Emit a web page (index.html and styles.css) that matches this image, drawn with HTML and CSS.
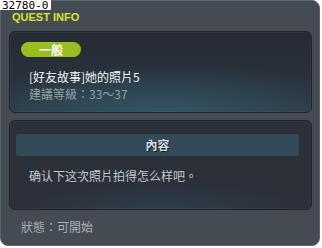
FILE: index.html
```html
<!DOCTYPE html>
<html lang="zh-TW">
<head>
    <meta charset="UTF-8">
    <meta name="viewport" content="width=device-width, initial-scale=1.0">
    <title>Quest Info</title>
    <link rel="stylesheet" href="styles.css">
</head>
<body>

    <div class="quest-window">
        <span class="quest-id">32780-0</span>
        <div class="window-title">QUEST INFO</div>

        <!-- Görev özeti -->
        <div class="panel summary">
            <span class="badge">一般</span>
            <div class="quest-name">[好友故事]她的照片5</div>
            <div class="quest-level">建議等級：33～37</div>
        </div>

        <!-- Görev içeriği -->
        <div class="panel content">
            <div class="content-head">內容</div>
            <div class="content-text">确认下这次照片拍得怎么样吧。</div>
        </div>

        <div class="quest-status">狀態：可開始</div>
    </div>

</body>
</html>
```

FILE: styles.css
```css
/* Sayfa genel ayarları */
body {
    margin: 0;
    background-color: #fff;
    font-family: "Noto Sans CJK TC", "DejaVu Sans", sans-serif;
}

/* Ana pencere */
.quest-window {
    position: relative;
    width: 320px;
    height: 246px;
    box-sizing: border-box;
    padding: 0 7px 0 8px;
    background-color: #444b53;
    border: 1px solid #5c656e;
    border-radius: 8px;
}

/* Sol üstteki kimlik etiketi */
.quest-id {
    position: absolute;
    top: -1px;
    left: -1px;
    height: 10px;
    padding: 0 3px 0 2px;
    background-color: #fff;
    color: #000;
    font-family: "DejaVu Sans Mono", monospace;
    font-size: 11px;
    line-height: 11px;
}

.window-title {
    height: 19px;
    padding: 11px 0 0 3px;
    color: #d6e62a;
    font-family: "Liberation Sans", Arial, sans-serif;
    font-weight: bold;
    font-size: 11px;
    line-height: 11px;
}

/* Panel ortak */
.panel {
    border: 1px solid #1f242b;
    border-radius: 6px;
    box-shadow: inset 0 0 0 1px rgba(255, 255, 255, 0.04);
}

.summary {
    height: 70px;
    box-sizing: content-box;
    padding: 10px 11px 0;
    background: radial-gradient(ellipse 70% 60% at 50% 100%, #335566 0%, rgba(51, 85, 102, 0) 100%),
                linear-gradient(#262b33, #2b3640);
}

.badge {
    display: block;
    width: 60px;
    height: 15px;
    border-radius: 8px;
    background-color: #98bf1d;
    color: #fff;
    font-weight: bold;
    font-size: 12px;
    line-height: 15px;
    text-align: center;
}

.quest-name {
    margin: 12px 0 0 8px;
    color: #f2f4f5;
    font-size: 12px;
    line-height: 16px;
}

.quest-level {
    margin: 1px 0 0 8px;
    color: #96a0a8;
    font-size: 12px;
    line-height: 15px;
}

.content {
    height: 75px;
    margin-top: 7px;
    padding: 13px 0 0 6px;
    box-sizing: content-box;
    background: radial-gradient(ellipse 50% 30% at 50% 100%, #2e3e4a 0%, rgba(46, 62, 74, 0) 100%),
                #2b3039;
}

.content-head {
    height: 22px;
    margin-right: 12px;
    border-radius: 3px;
    background-color: #334a58;
    color: #d6dce0;
    font-weight: bold;
    font-size: 12px;
    line-height: 22px;
    text-align: center;
    text-shadow: 1px 1px 0 #161b20;
}

.content-text {
    margin: 12px 0 0 13px;
    color: #c3c9ce;
    font-size: 12px;
    line-height: 16px;
}

.quest-status {
    margin: 9px 0 0 12px;
    color: #a9b1b7;
    font-size: 12px;
    line-height: 16px;
}
```
